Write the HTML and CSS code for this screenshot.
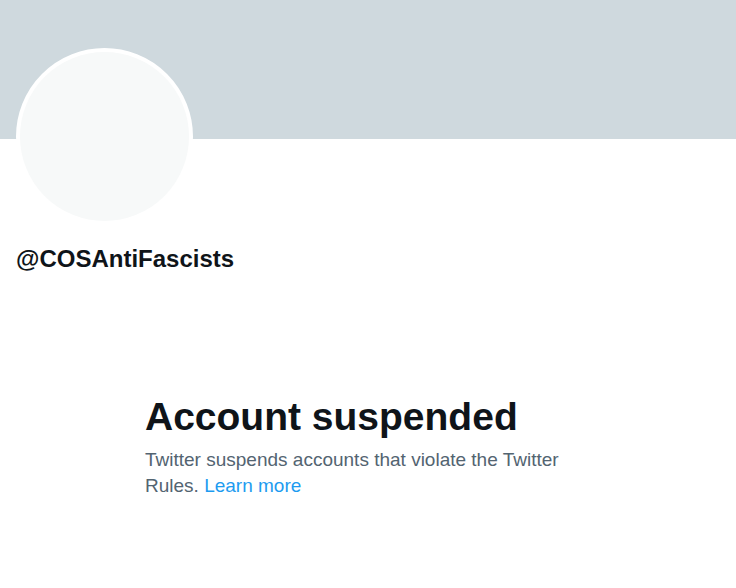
FILE: index.html
```html
<!DOCTYPE html>
<html lang="en">
<head>
  <meta charset="UTF-8">
  <title>@COSAntiFascists</title>
  <link rel="stylesheet" href="styles.css">
</head>
<body>

<!-- Profile header -->
<div class="header">
  <div class="banner"></div>
  <div class="avatar-row">
    <div class="avatar"></div>
  </div>
  <div class="handle">@COSAntiFascists</div>
</div>

<!-- Suspended message -->
<div class="empty-state">
  <h1>Account suspended</h1>
  <p>Twitter suspends accounts that violate the Twitter Rules. <a href="#">Learn more</a></p>
</div>

</body>
</html>
```

FILE: styles.css
```css
html, body {
  margin: 0;
  background-color: #fff;
  font-family: "Liberation Sans", Arial, sans-serif;
  color: #0f1419;
}

/* Banner */
.banner {
  height: 139px;
  background-color: #cfd9de;
}

.avatar-row {
  padding: 0 16px;
  margin-top: -91px;
}

/* Avatar with white ring */
.avatar {
  width: 169px;
  height: 169px;
  border-radius: 50%;
  border: 4px solid #fff;
  background-color: #f7f9f9;
}

.handle {
  font-size: 24px;
  font-weight: bold;
  padding: 0 16px;
  margin-top: 20px;
  line-height: 28px;
}

/* Empty state */
.empty-state {
  width: 450px;
  margin: 122px 0 0 145px;
}

.empty-state h1 {
  font-size: 39px;
  line-height: 44px;
  margin: 0 0 8px;
}

.empty-state p {
  font-size: 19px;
  line-height: 26px;
  color: #536471;
  margin: 0;
}

.empty-state a {
  color: #1d9bf0;
  text-decoration: none;
}
```
